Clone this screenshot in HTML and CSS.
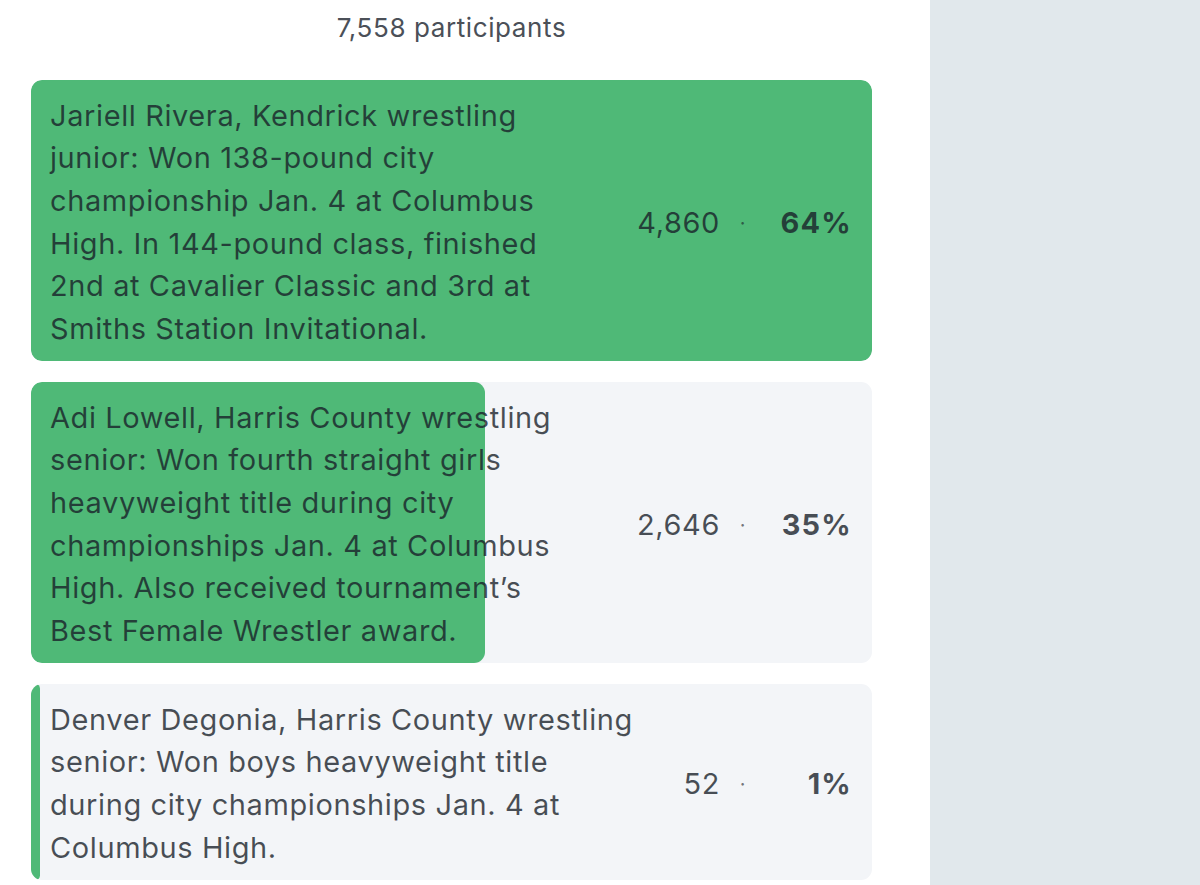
FILE: index.html
```html
<!DOCTYPE html>
<html lang="en">
<head>
<meta charset="utf-8">
<title>Poll results</title>
<link rel="stylesheet" href="styles.css">
</head>
<body>
<div class="page">
  <main class="main">
    <section class="poll">
      <div class="poll-count">7,558 participants</div>
      <ul class="poll-options">
        <li class="option">
          <div class="option-fill" style="width: 100%"></div>
          <div class="option-text">Jariell Rivera, Kendrick wrestling<br>junior: Won 138-pound city<br>championship Jan. 4 at Columbus<br>High. In 144-pound class, finished<br>2nd at Cavalier Classic and 3rd at<br>Smiths Station Invitational.</div>
          <div class="option-stats">
            <span class="votes">4,860</span>
            <span class="sep">·</span>
            <span class="pct">64%</span>
          </div>
        </li>
        <li class="option">
          <div class="option-fill" style="width: 54%"></div>
          <div class="option-text">Adi Lowell, Harris County wrestling<br>senior: Won fourth straight girls<br>heavyweight title during city<br>championships Jan. 4 at Columbus<br>High. Also received tournament’s<br>Best Female Wrestler award.</div>
          <div class="option-stats">
            <span class="votes">2,646</span>
            <span class="sep">·</span>
            <span class="pct">35%</span>
          </div>
        </li>
        <li class="option">
          <div class="option-fill" style="width: 9px"></div>
          <div class="option-text">Denver Degonia, Harris County wrestling<br>senior: Won boys heavyweight title<br>during city championships Jan. 4 at<br>Columbus High.</div>
          <div class="option-stats">
            <span class="votes">52</span>
            <span class="sep">·</span>
            <span class="pct">1%</span>
          </div>
        </li>
      </ul>
    </section>
  </main>
  <aside class="sidebar"></aside>
</div>
</body>
</html>
```
FILE: styles.css
```css
* { box-sizing: border-box; }

html, body {
  margin: 0;
  padding: 0;
  height: 100%;
}

body {
  font-family: Inter, "Open Sans", sans-serif;
  color: #4b5058;
  background: #ffffff;
  overflow: hidden;
}

.page {
  display: flex;
  height: 885px;
}

.main {
  width: 930px;
  flex: none;
  padding: 0 58px 0 31px;
}

.sidebar {
  flex: 1;
  background: #e1e8ec;
}

.poll-count {
  text-align: center;
  font-size: 26px;
  line-height: 40px;
  letter-spacing: 0.6px;
  padding-top: 8px;
  height: 80px;
  color: #4b5058;
}

.poll-options {
  list-style: none;
  margin: 0;
  padding: 0;
  display: flex;
  flex-direction: column;
  gap: 21px;
}

.option {
  position: relative;
  display: flex;
  align-items: center;
  background: #f3f5f8;
  border-radius: 11px;
  padding: 14.5px 21px 10.5px 19px;
  overflow: hidden;
}

.option-fill {
  position: absolute;
  left: 0;
  top: 0;
  bottom: 0;
  background: #4fb977;
  border-radius: 11px;
}

.option-text {
  position: relative;
  flex: 1;
  font-size: 29px;
  line-height: 42.67px;
  letter-spacing: 0.6px;
  color: rgba(24, 30, 40, 0.78);
}

.option-stats {
  position: relative;
  display: flex;
  align-items: center;
  font-size: 29px;
  line-height: 42px;
  letter-spacing: 0.6px;
  color: rgba(24, 30, 40, 0.78);
}

.votes {
  text-align: right;
}

.sep {
  width: 12px;
  margin: 0 29px 0 17px;
  text-align: center;
  font-size: 20px;
  color: rgba(24, 30, 40, 0.6);
}

.pct {
  width: 74px;
  text-align: right;
  font-weight: 700;
  letter-spacing: 1.2px;
  margin-right: -1px;
}
```
